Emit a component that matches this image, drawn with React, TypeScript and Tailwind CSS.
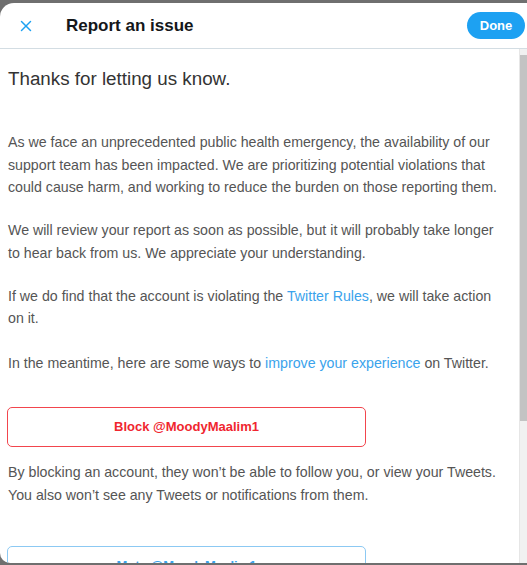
import { X } from 'lucide-react';

const Paragraph = ({ children }: { children: React.ReactNode }) => (
  <p className="mb-[20.5px] text-[14.2px] leading-[22.5px] text-[#555555]">{children}</p>
);

const Link = ({ children }: { children: React.ReactNode }) => (
  <a className="text-[#3aa3ec]">{children}</a>
);

const App = () => {
  return (
    <div className="h-[565px] w-[527px] overflow-hidden bg-[#6f6f6f] pt-[3px] pb-[2px] font-['Liberation_Sans',Arial,sans-serif]">
      <div className="flex h-full flex-col overflow-hidden rounded-tl-[14px] rounded-bl-[10px] bg-white">
        <header className="flex h-[46px] shrink-0 items-center border-b border-[#d3dde3] pl-[16px] pr-[2px]">
          <button className="flex h-[20px] w-[20px] items-center justify-center text-[#1da1f2]">
            <X className="h-[18px] w-[18px]" strokeWidth={2} />
          </button>
          <h1 className="ml-[30px] flex-1 text-[17px] font-bold text-[#14171a]">Report an issue</h1>
          <button className="h-[27px] w-[58px] rounded-full bg-[#1da1f2] text-[13px] font-bold text-white">
            Done
          </button>
        </header>

        <div className="flex min-h-0 flex-1">
          <div className="flex-1 overflow-hidden pl-[8px] pr-[11px] pt-[18px]">
            <h2 className="mb-[40px] text-[18.8px] leading-[24px] text-[#333333]">Thanks for letting us know.</h2>
            <Paragraph>
              As we face an unprecedented public health emergency, the availability of our support team has been
              impacted. We are prioritizing potential violations that could cause harm, and working to reduce the
              burden on those reporting them.
            </Paragraph>
            <Paragraph>
              We will review your report as soon as possible, but it will probably take longer to hear back from us.
              We appreciate your understanding.
            </Paragraph>
            <Paragraph>
              If we do find that the account is violating the <Link>Twitter Rules</Link>, we will take action on it.
            </Paragraph>
            <p className="mt-[22px] text-[14.2px] leading-[22.5px] text-[#555555]">
              In the meantime, here are some ways to <Link>improve your experience</Link> on Twitter.
            </p>

            <button className="mt-[33px] ml-[-1px] flex h-[40px] w-[359px] items-center justify-center rounded-[5px] border border-[#f2454d] text-[13px] font-bold text-[#f0262f]">
              Block @MoodyMaalim1
            </button>
            <p className="mt-[14px] text-[14.2px] leading-[22.5px] text-[#555555]">
              By blocking an account, they won’t be able to follow you, or view your Tweets. You also won’t see any
              Tweets or notifications from them.
            </p>
            <button className="mt-[40px] ml-[-1px] flex h-[40px] w-[359px] items-center justify-center rounded-[5px] border border-[#8cc9f3] text-[13px] font-bold text-[#3aa3ec]">
              Mute @MoodyMaalim1
            </button>
          </div>

          <div className="flex w-[8px] shrink-0 flex-col border-l border-[#e6e6e6] bg-[#f1f1f1] pt-[6px]">
            <div className="h-[366px] w-full bg-[#c3c3c3]" />
          </div>
        </div>
      </div>
    </div>
  );
};

export default App;
